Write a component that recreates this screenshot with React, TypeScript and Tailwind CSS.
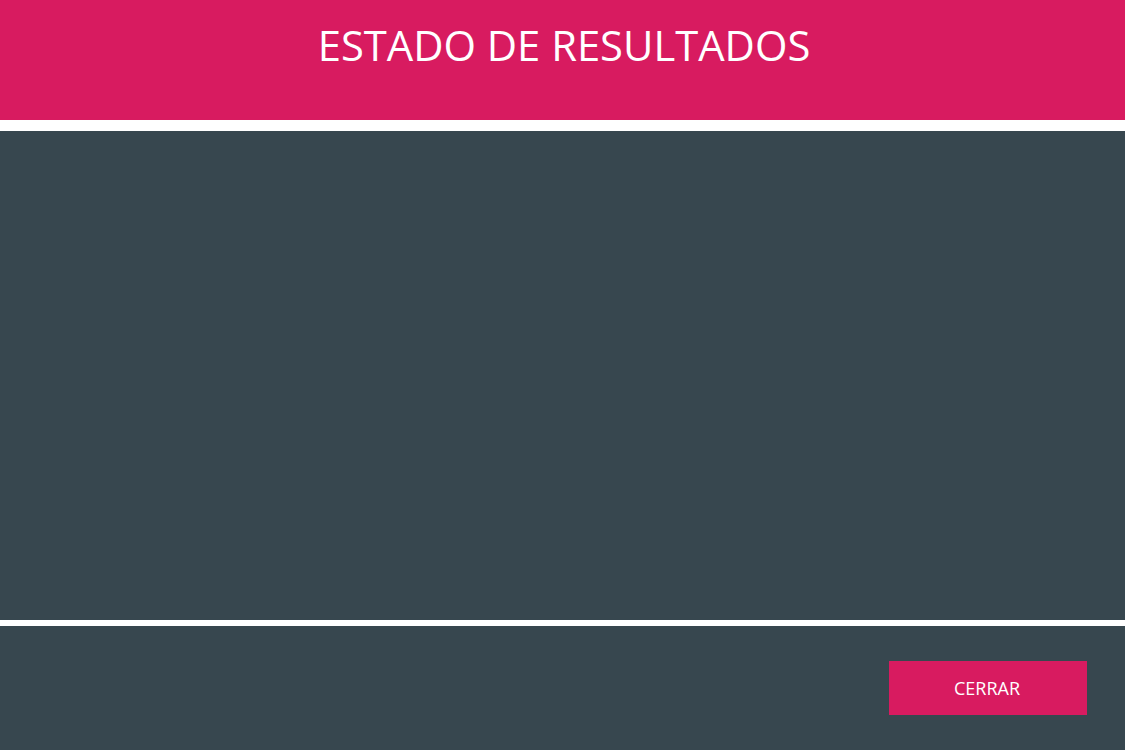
import React from 'react';

const App: React.FC = () => {
  return (
    <div className="w-[1125px] h-[750px] bg-white flex flex-col font-['Open_Sans',sans-serif]">
      {/* Header */}
      <header className="h-[120px] bg-[#d81b60] flex justify-center pl-[3px]">
        <h1 className="text-white text-[41.75px] leading-none pt-[24px] font-normal tracking-normal">
          ESTADO DE RESULTADOS
        </h1>
      </header>

      {/* Body panel */}
      <main className="mt-[11px] h-[489px] bg-[#37474f]"></main>

      {/* Footer */}
      <footer className="mt-[6px] flex-1 bg-[#37474f] flex items-start justify-end pt-[35px] pr-[38px]">
        <button className="w-[198px] h-[54px] bg-[#d81b60] text-white text-[18px] flex items-center justify-center pr-[2px]">
          CERRAR
        </button>
      </footer>
    </div>
  );
};

export default App;
